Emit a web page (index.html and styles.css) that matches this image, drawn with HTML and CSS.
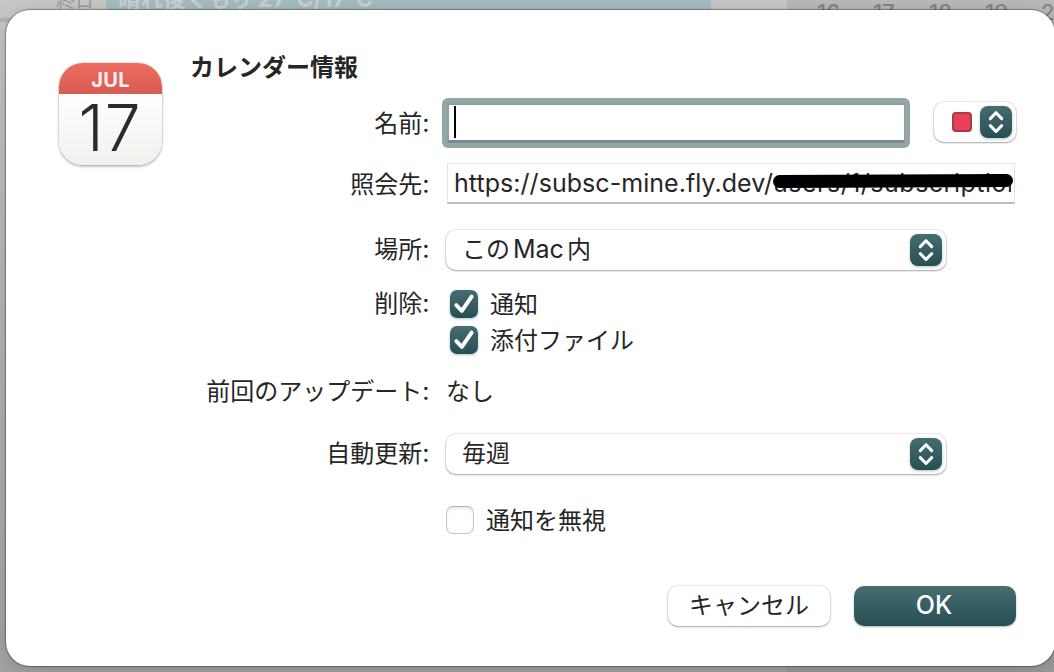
FILE: index.html
```html
<!DOCTYPE html>
<html lang="ja">
<head>
<meta charset="utf-8">
<title>カレンダー情報</title>
<link rel="stylesheet" href="styles.css">
</head>
<body>
<div class="backdrop">
  <div class="day-pane">
    <span class="all-day">終日</span>
    <span class="event">晴れ後くもり <i>27°C/17°C</i></span>
  </div>
  <div class="mini-month"><span>16</span><span>17</span><span>18</span><span>19</span><span>20</span></div>
</div>
<main class="dialog">
  <div class="app-icon"><div class="month">JUL</div><div class="day">17</div></div>
  <form class="form">
    <h1 class="title">カレンダー情報</h1>

    <div class="row row-name">
      <span class="label">名前<i>:</i></span>
      <div class="focus-ring"><div class="name-field"><span class="caret"></span></div></div>
      <div class="popup color-popup">
        <span class="swatch"></span>
        <span class="stepper"><svg viewBox="0 0 32 32"><path d="M10.300 12.600 16 6.700l5.700 5.900M10.300 19.600 16 25.500l5.700-5.900"/></svg></span>
      </div>
    </div>

    <div class="row row-url">
      <span class="label">照会先<i>:</i></span>
      <div class="url-field">
        <span class="url">https://subsc-mine.fly.dev/<b class="path">users/1/subscriptions</b></span>
        <svg class="marker" viewBox="0 0 242 16"><path d="M7.500 8.500 234.500 7.500"/></svg>
      </div>
    </div>

    <div class="row row-place">
      <span class="label">場所<i>:</i></span>
      <div class="popup wide"><span class="value">この<i class="mac">Mac</i>内</span>
        <span class="stepper"><svg viewBox="0 0 32 32"><path d="M10.300 12.600 16 6.700l5.700 5.900M10.300 19.600 16 25.500l5.700-5.900"/></svg></span>
      </div>
    </div>

    <div class="row row-remove">
      <span class="label">削除<i>:</i></span>
      <span class="check on"><svg viewBox="0 0 28 28"><path d="M6.300 15.200 11.800 20.900 21.600 6.700"/></svg></span>
      <span class="check-label">通知</span>
    </div>
    <div class="row row-attach">
      <span class="label"></span>
      <span class="check on"><svg viewBox="0 0 28 28"><path d="M6.300 15.200 11.800 20.900 21.600 6.700"/></svg></span>
      <span class="check-label">添付ファイル</span>
    </div>

    <div class="row row-updated">
      <span class="label">前回のアップデート<i>:</i></span>
      <span class="static">なし</span>
    </div>

    <div class="row row-refresh">
      <span class="label">自動更新<i>:</i></span>
      <div class="popup wide"><span class="value">毎週</span>
        <span class="stepper"><svg viewBox="0 0 32 32"><path d="M10.300 12.600 16 6.700l5.700 5.900M10.300 19.600 16 25.500l5.700-5.900"/></svg></span>
      </div>
    </div>

    <div class="row row-ignore">
      <span class="label"></span>
      <span class="check off"></span>
      <span class="check-label">通知を無視</span>
    </div>

    <div class="actions">
      <button type="button" class="button"><span>キャンセル</span></button>
      <button type="button" class="button primary"><span>OK</span></button>
    </div>
  </form>
</main>
</body>
</html>
```
FILE: styles.css
```css
* { box-sizing: border-box; }
body {
  margin: 0;
  width: 1054px;
  height: 672px;
  overflow: hidden;
  position: relative;
  font: 24px/36px "Noto Sans CJK JP", sans-serif;
  color: #262626;
}
i { font-family: Inter, "Noto Sans CJK JP", sans-serif; font-style: normal; font-size: 25px; line-height: 1; }

.backdrop {
  display: flex;
  height: 672px;
  background: linear-gradient(#c8c8c8, #b5b5b5 50%, #a4a4a4);
  overflow: hidden;
}
.day-pane { width: 787px; height: 22px; display: flex; border-bottom: 4px solid #b4b4b4; }
.all-day {
  width: 106px;
  padding-left: 56px;
  font-size: 19px;
  line-height: 28px;
  margin-top: -15px;
  color: #999;
  white-space: nowrap;
}
.event {
  width: 605px;
  height: 25px;
  margin-top: -3px;
  padding-left: 12px;
  background: #a6bcc0;
  color: #c8d1d3;
  font: bold 22.5px/0 "Noto Sans CJK JP", sans-serif;
  white-space: nowrap;
}
.event i { font-size: 23px; line-height: 0; }
.mini-month {
  width: 267px;
  display: flex;
  gap: 25px;
  padding-left: 30px;
  background: linear-gradient(#bababa, #aaa 50%, #9c9c9c);
  color: #858585;
  font: 500 22px/24px Inter, sans-serif;
}
.mini-month span { flex: 0 0 31px; }

.dialog {
  position: absolute;
  left: 6px;
  top: 10px;
  width: 1049px;
  height: 656px;
  display: flex;
  padding: 40px 38px 0 52px;
  background: #fff;
  border-radius: 24px;
  box-shadow: 0 0 1px 1px rgba(0, 0, 0, .33), 0 4px 20px rgba(0, 0, 0, .18);
}
.app-icon {
  flex: none;
  width: 103px;
  height: 102px;
  margin: 13px 0 0 1px;
  border-radius: 24px;
  overflow: hidden;
  background: linear-gradient(#fff 30%, #f1f0ed);
  box-shadow: 0 0 1px 1px rgba(0, 0, 0, .1), 0 2px 3px rgba(0, 0, 0, .22);
  text-align: center;
}
.month {
  height: 31px;
  background: linear-gradient(#ed6b60, #d95c50);
  color: #fbeeee;
  font: 700 20px/34px Inter, sans-serif;
  letter-spacing: .3px;
}
.day { color: #2b2b2b; font: 300 64px/68px Inter, sans-serif; padding-right: 1px; letter-spacing: 1px; }

.form { width: 826px; margin-left: 28px; }
.title { margin: 0; height: 48px; font-size: 24px; line-height: 32px; font-weight: 700; }
.row { display: flex; height: 36px; }
.label { width: 239.5px; margin-right: .5px; flex: none; text-align: right; white-space: nowrap; }

.row-name { height: 50px; }
.row-name .label { padding-top: 6px; }
.focus-ring {
  width: 468px;
  height: 50px;
  margin-left: 12px;
  padding: 5px;
  border-radius: 6px;
  background: #93a7a7;
}
.name-field {
  height: 40px;
  padding: 1px 0 0 6px;
  background: #fff;
  border: 1px solid #899e9e;
  border-width: 2px 1px 3px 2px;
  border-color: #8a9f9f #8a9f9f #768c8c;
}
.caret { display: block; width: 2px; height: 32px; margin-left: -1px; background: #000; }

.popup {
  display: flex;
  align-items: center;
  height: 40px;
  border-radius: 10px;
  background: #fff;
  box-shadow: 0 0 1px 1px rgba(0, 0, 0, .08), 0 1px 2px rgba(0, 0, 0, .3);
}
.color-popup { width: 82px; margin: 4px 0 0 24px; padding: 0 4px 0 18px; justify-content: space-between; }
.swatch { width: 20px; height: 20px; border: 2px solid #a73b4c; border-radius: 4px; background: #e8415a; }
.stepper, .check.on {
  background: linear-gradient(#466d71, #264f54);
  box-shadow: 0 1px 3px rgba(38, 79, 84, .35);
}
.stepper { width: 32px; height: 32px; flex: none; border-radius: 8px; }
.stepper svg, .check svg { display: block; width: 100%; height: 100%; fill: none; stroke: #fff; stroke-linecap: round; stroke-linejoin: round; }
.stepper svg { stroke-width: 3; }

.row-url { height: 41px; margin-top: 15px; }
.row-url .label { padding-top: 2px; }
.url-field {
  position: relative;
  width: 568px;
  height: 41px;
  margin-left: 17px;
  padding: 0 3px 0 6px;
  border: 1px solid #e4e4e4;
  border-bottom: 2px solid #bdbdbd;
}
.url {
  display: block;
  overflow: hidden;
  white-space: nowrap;
  font: 25px/38px Inter, sans-serif;
  letter-spacing: .05px;
}
.path { font-weight: 400; letter-spacing: .5px; }
.marker { position: absolute; left: 324px; top: 9px; width: 242px; height: 16px; fill: none; stroke: #000; stroke-width: 13; stroke-linecap: round; }

.row-place { height: 40px; margin-top: 26px; }
.wide { width: 500px; margin-left: 16px; padding: 0 4px 0 16px; justify-content: space-between; }
.value { padding-bottom: 4px; }
.mac { margin: 0 3px; }
.row-remove { margin-top: 16px; }
.row-remove .label { margin-top: -2px; }
.check { width: 28px; height: 28px; flex: none; margin: 4px 0 0 20px; border-radius: 7px; }
.check svg { stroke-width: 4; }
.check.off { margin-left: 16px; border: 1px solid #c9c9c9; border-top-color: #b5b5b5; box-shadow: inset 0 2px 3px rgba(0, 0, 0, .09); }
.check-label { margin: -1px 0 0 12px; }
.row-updated { margin-top: 15px; line-height: 34px; }
.static { margin-left: 16px; }
.row-refresh { height: 40px; margin-top: 25px; }
.row-ignore { margin-top: 28px; }

.actions { display: flex; justify-content: flex-end; gap: 24px; margin-top: 48px; }
.button {
  width: 162px;
  height: 40px;
  padding: 0 0 4px;
  border: 0;
  border-radius: 10px;
  background: #fff;
  box-shadow: 0 0 1px 1px rgba(0, 0, 0, .08), 0 1px 2px rgba(0, 0, 0, .3);
  color: #262626;
  font: 24px/36px "Noto Sans CJK JP", sans-serif;
}
.button span { display: block; }
.primary {
  padding: 0 2px 2px 0;
  background: linear-gradient(#466d71, #264f54);
  box-shadow: 0 1px 2px rgba(38, 79, 84, .4);
  color: #fff;
  font: 500 25px/36px Inter, sans-serif;
}
```
